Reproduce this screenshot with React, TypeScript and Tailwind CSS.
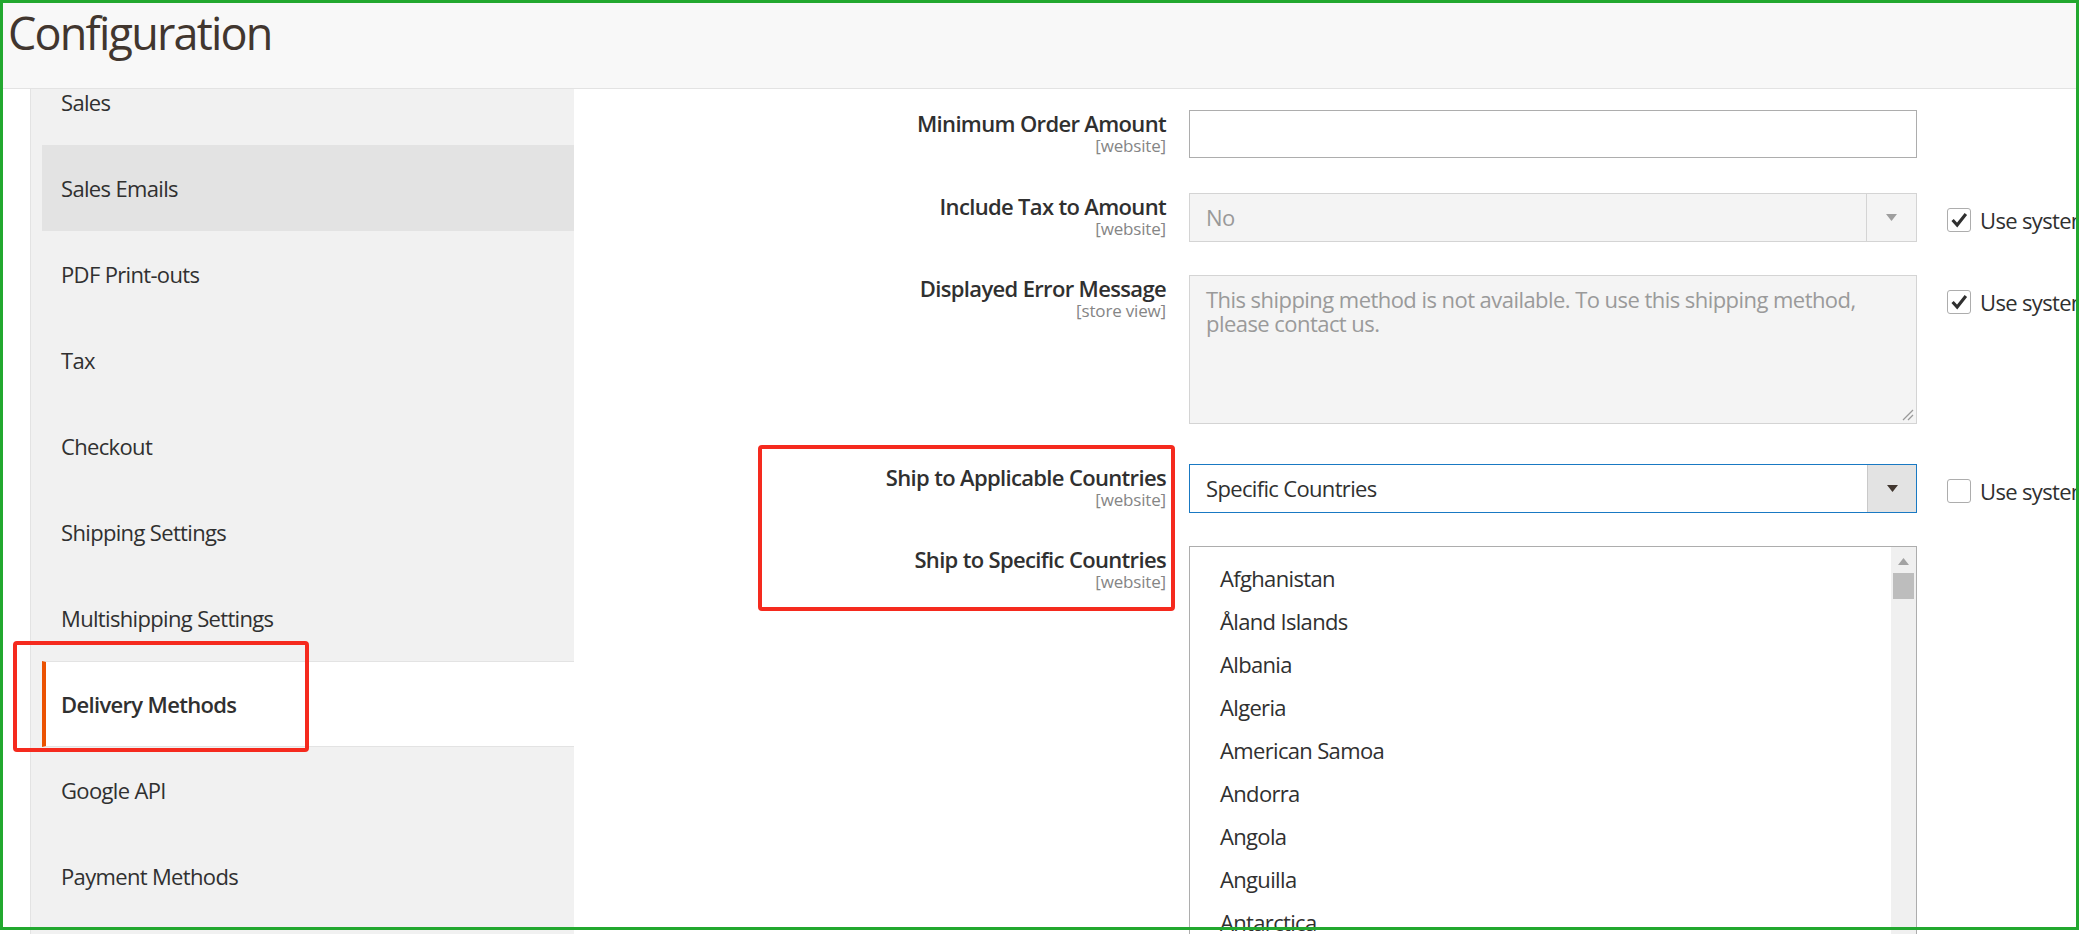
import React from 'react';
import clsx from 'clsx';

const navItems = [
  { label: 'Sales' },
  { label: 'Sales Emails', hover: true },
  { label: 'PDF Print-outs' },
  { label: 'Tax' },
  { label: 'Checkout' },
  { label: 'Shipping Settings' },
  { label: 'Multishipping Settings' },
  { label: 'Delivery Methods', active: true },
  { label: 'Google API' },
  { label: 'Payment Methods' },
  { label: 'Persistent Shopping Cart' },
];

const countries = [
  'Afghanistan',
  'Åland Islands',
  'Albania',
  'Algeria',
  'American Samoa',
  'Andorra',
  'Angola',
  'Anguilla',
  'Antarctica',
  'Antigua & Barbuda',
];

function Arrow({ up, color }: { up?: boolean; color: string }) {
  return (
    <svg width="11" height="7" viewBox="0 0 11 7" className="block">
      <polygon points={up ? '5.5,0 11,7 0,7' : '0,0 11,0 5.5,7'} fill={color} />
    </svg>
  );
}

function UseSystem({ checked }: { checked?: boolean }) {
  return (
    <div className="flex items-center gap-[9px]">
      <span className="flex h-[24px] w-[24px] items-center justify-center rounded-[3px] border border-[#adadad] bg-white">
        {checked && (
          <svg width="22" height="22" viewBox="0 0 24 24">
            <path d="M5 12 L10 17.5 L19.5 5.5" fill="none" stroke="#303030" strokeWidth="3.4" />
          </svg>
        )}
      </span>
      <span className="text-[22px] leading-[24px] tracking-[-0.03em] text-[#303030]">Use system value</span>
    </div>
  );
}

function Row({
  label,
  scope,
  aside,
  className,
  children,
}: {
  label: string;
  scope: string;
  aside?: React.ReactNode;
  className?: string;
  children: React.ReactNode;
}) {
  return (
    <div className={clsx('flex items-start', className)}>
      <div className="w-[592px] shrink-0 text-right">
        <div className="text-[22px] font-semibold leading-[26px] tracking-[-0.03em] text-[#303030]">{label}</div>
        <div className="text-[17px] leading-[20px] tracking-[-0.01em] text-[#858585]">{scope}</div>
      </div>
      <div className="ml-[23px] w-[728px] shrink-0">{children}</div>
      {aside && <div className="ml-[30px] shrink-0 whitespace-nowrap pt-[15px]">{aside}</div>}
    </div>
  );
}

export default function App() {
  return (
    <div className="relative h-[934px] w-[2083px] overflow-hidden bg-white font-['Open_Sans',sans-serif]">
      <div className="h-full w-[2077px] overflow-hidden">
        {/* Page title */}
        <div className="h-[89px] border-b border-[#e3e3e3] bg-[#f8f8f8] pl-[8px] pt-[4px]">
          <h1 className="text-[45px] leading-[58px] tracking-[-0.04em] text-[#41362f]">Configuration</h1>
        </div>

        <div className="flex h-[845px]">
          {/* Config tabs */}
          <div className="ml-[30px] h-full w-[544px] shrink-0 overflow-hidden border-l border-[#e3e3e3] bg-[#f1f1f1]">
            <ul className="-mt-[30px]">
              {navItems.map((item) => (
                <li
                  key={item.label}
                  className={clsx(
                    'ml-[11px] flex h-[86px] items-center text-[22px] tracking-[-0.03em] text-[#303030]',
                    item.active
                      ? 'border-y border-l-4 border-y-[#e3e3e3] border-l-[#eb5202] bg-white pl-[15px] font-semibold'
                      : 'pl-[19px]',
                    item.hover && 'bg-[#e3e3e3]'
                  )}
                >
                  {item.label}
                </li>
              ))}
            </ul>
          </div>

          {/* Form */}
          <div className="min-w-0 flex-1 pt-[21px]">
            <Row label="Minimum Order Amount" scope="[website]">
              <div className="h-[48px] border border-[#adadad] bg-white" />
            </Row>

            <Row label="Include Tax to Amount" scope="[website]" className="mt-[35px]" aside={<UseSystem checked />}>
              <div className="flex h-[49px] border border-[#d4d4d4] bg-[#f4f4f4]">
                <div className="flex flex-1 items-center pl-[16px] text-[22px] tracking-[-0.03em] text-[#999999]">No</div>
                <div className="flex w-[50px] items-center justify-center border-l border-[#d4d4d4]">
                  <Arrow color="#9e9e9e" />
                </div>
              </div>
            </Row>

            <Row label="Displayed Error Message" scope="[store view]" className="mt-[33px]" aside={<UseSystem checked />}>
              <div className="relative h-[149px] border border-[#d4d4d4] bg-[#f4f4f4] px-[16px] pt-[11px] text-[22px] leading-[24px] tracking-[-0.025em] text-[#9a9a9a]">
                This shipping method is not available. To use this shipping method, please contact us.
                <svg width="12" height="12" viewBox="0 0 12 12" className="absolute bottom-[2px] right-[2px]">
                  <path d="M1 11 L11 1 M6 11 L11 6" stroke="#9a9a9a" strokeWidth="1.3" />
                </svg>
              </div>
            </Row>

            <Row label="Ship to Applicable Countries" scope="[website]" className="mt-[40px]" aside={<UseSystem />}>
              <div className="flex h-[49px] border border-[#1979c3] bg-white">
                <div className="flex flex-1 items-center pl-[16px] text-[22px] tracking-[-0.03em] text-[#303030]">
                  Specific Countries
                </div>
                <div className="flex w-[49px] items-center justify-center border-l border-[#c9c9c9] bg-[#e3e3e3]">
                  <Arrow color="#41362f" />
                </div>
              </div>
            </Row>

            <Row label="Ship to Specific Countries" scope="[website]" className="mt-[33px]">
              <div className="flex h-[420px] border border-[#adadad] bg-white">
                <ul className="flex-1 pl-[30px] pt-[10px]">
                  {countries.map((c) => (
                    <li key={c} className="flex h-[43px] items-center text-[22px] tracking-[-0.03em] text-[#303030]">
                      {c}
                    </li>
                  ))}
                </ul>
                <div className="flex w-[25px] flex-col items-center bg-[#f0f0f0] pt-[11px]">
                  <Arrow up color="#a3a3a3" />
                  <div className="mt-[8px] h-[26px] w-[21px] bg-[#bdbdbd]" />
                </div>
              </div>
            </Row>
          </div>
        </div>
      </div>

      {/* Annotation frames */}
      <div className="pointer-events-none absolute left-0 top-0 h-[930px] w-[2079px] border-[3px] border-[#22a82f]" />
      <div className="pointer-events-none absolute left-[758px] top-[445px] h-[166px] w-[417px] rounded-[4px] border-4 border-[#f52a1e]" />
      <div className="pointer-events-none absolute left-[13px] top-[641px] h-[111px] w-[296px] rounded-[4px] border-4 border-[#f52a1e]" />
    </div>
  );
}
